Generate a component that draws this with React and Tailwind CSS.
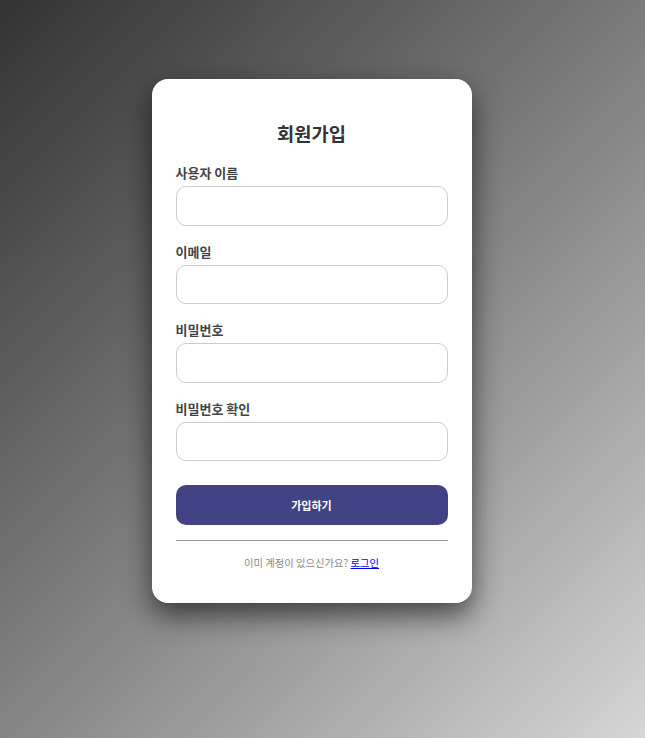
import React from 'react';

const fields = [
    { id: 'username', label: '사용자 이름', type: 'text' },
    { id: 'email', label: '이메일', type: 'email' },
    { id: 'password', label: '비밀번호', type: 'password' },
    { id: 'confirm', label: '비밀번호 확인', type: 'password' },
];

function App() {
    return (
        <div
            className="min-h-screen w-full bg-linear-135 from-[#333333] to-[#d6d6d6] flex justify-center items-start pt-[79px] pr-[22px]"
            style={{ fontFamily: '"Noto Sans CJK KR", "Noto Sans", sans-serif' }}
        >
            <div className="w-[320px] bg-white rounded-2xl shadow-[0_12px_28px_rgba(0,0,0,0.6)] px-6 pt-10 pb-8">
                <h2 className="text-[18.7px] leading-7 font-bold text-[#333] text-center mb-4">회원가입</h2>
                <form>
                    {fields.map(f => (
                        <div key={f.id} className="mb-4">
                            <label htmlFor={f.id} className="block text-[13px] leading-5 font-bold text-[#444] mb-[3px]">
                                {f.label}
                            </label>
                            <input
                                id={f.id}
                                type={f.type}
                                className="block w-full h-[39.5px] px-3 border border-[#ccc] rounded-[10px] bg-white outline-none"
                            />
                        </div>
                    ))}
                    <button
                        type="button"
                        className="mt-2 w-full h-10 rounded-[10px] bg-[#424385] text-white text-[11px] font-bold"
                    >
                        가입하기
                    </button>
                </form>
                <hr className="mt-[15px] border-t border-[#999]" />
                <p className="mt-[14px] text-[10.3px] leading-4 text-[#888] text-center">
                    이미 계정이 있으신가요? <a href="#" className="text-[#0000ee] underline">로그인</a>
                </p>
            </div>
        </div>
    );
}

export default App;
